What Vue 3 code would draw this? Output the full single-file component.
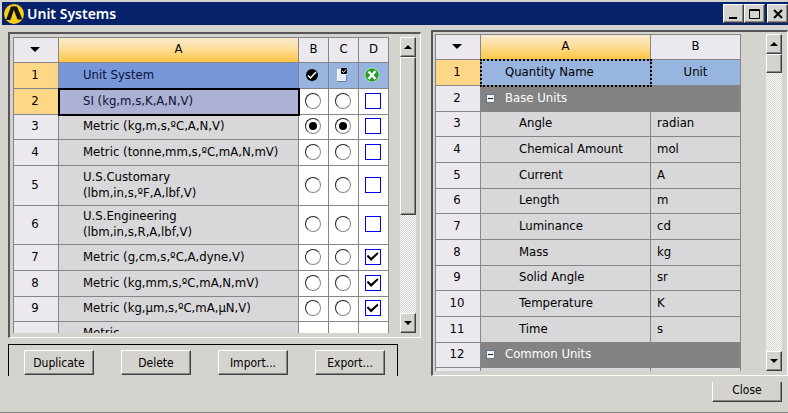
<script setup>
import { ref } from 'vue'

const active = ref(3)
const projectDefault = ref(3)
const systems = ref([
  { id: 2, lines: ['SI (kg,m,s,K,A,N,V)'], hidden: false },
  { id: 3, lines: ['Metric (kg,m,s,ºC,A,N,V)'], hidden: false },
  { id: 4, lines: ['Metric (tonne,mm,s,ºC,mA,N,mV)'], hidden: false },
  { id: 5, lines: ['U.S.Customary', '(lbm,in,s,ºF,A,lbf,V)'], hidden: false },
  { id: 6, lines: ['U.S.Engineering', '(lbm,in,s,R,A,lbf,V)'], hidden: false },
  { id: 7, lines: ['Metric (g,cm,s,ºC,A,dyne,V)'], hidden: true },
  { id: 8, lines: ['Metric (kg,mm,s,ºC,mA,N,mV)'], hidden: true },
  { id: 9, lines: ['Metric (kg,µm,s,ºC,mA,µN,V)'], hidden: true },
  { id: '', lines: ['Metric', ''], hidden: true },
])

const quantities = [
  { id: 2, group: 'Base Units' },
  { id: 3, name: 'Angle', unit: 'radian' },
  { id: 4, name: 'Chemical Amount', unit: 'mol' },
  { id: 5, name: 'Current', unit: 'A' },
  { id: 6, name: 'Length', unit: 'm' },
  { id: 7, name: 'Luminance', unit: 'cd' },
  { id: 8, name: 'Mass', unit: 'kg' },
  { id: 9, name: 'Solid Angle', unit: 'sr' },
  { id: 10, name: 'Temperature', unit: 'K' },
  { id: 11, name: 'Time', unit: 's' },
  { id: 12, group: 'Common Units' },
  { id: '', name: '', unit: '' },
]
const actions = ['Duplicate', 'Delete', 'Import...', 'Export...']
</script>

<template>
  <div class="window">
    <header class="titlebar">
      <svg class="logo" viewBox="0 0 20 20" aria-hidden="true">
        <circle cx="10" cy="10" r="10" fill="#f8cd1c" />
        <path d="M2 16 7 2.500H11L6.500 16Z" fill="#15150f" />
        <path d="M8.500 2.500H13L18.500 15.500H13.500Z" fill="#15150f" />
      </svg>
      <h1>Unit Systems</h1>
      <div class="window-buttons">
        <button type="button" class="bevel" aria-label="Minimize">
          <svg viewBox="0 0 18 16"><path d="M4 12h8" stroke="#000" stroke-width="2" /></svg>
        </button>
        <button type="button" class="bevel" aria-label="Maximize">
          <svg viewBox="0 0 18 16"><path d="M3.500 3.500h10v9H3.500zM4 4.500h9" fill="none" stroke="#000" /></svg>
        </button>
        <button type="button" class="bevel close-x" aria-label="Close window">
          <svg viewBox="0 0 18 16"><path d="M5 4l8 8M13 4l-8 8" stroke="#000" stroke-width="2" /></svg>
        </button>
      </div>
    </header>

    <main class="content">
      <div class="left">
        <section class="panel">
          <div class="sheet">
            <table>
              <colgroup>
                <col class="c-num" /><col /><col class="c-opt" /><col class="c-opt" /><col class="c-opt" />
              </colgroup>
              <tbody>
                <tr>
                  <th class="num"><i class="down"></i></th>
                  <th class="gold">A</th>
                  <th>B</th>
                  <th>C</th>
                  <th>D</th>
                </tr>
                <tr>
                  <th class="num current">1</th>
                  <td class="name head-strong">Unit System</td>
                  <td class="head icon">
                    <svg width="14" height="16" viewBox="0 0 14 16" role="img" aria-label="Active">
                      <circle cx="7" cy="8" r="6" fill="#000" />
                      <path d="M3 8.500 5.500 11 11 5" fill="none" stroke="#fff" stroke-width="1.500" />
                    </svg>
                  </td>
                  <td class="head icon">
                    <svg width="14" height="16" viewBox="0 0 14 16" role="img" aria-label="Default">
                      <path d="M2 2h10v13H2z" fill="#e4eaf6" />
                      <path d="M2.500 15V2.500H7" fill="none" stroke="#fff" />
                      <path d="M2 14.500h9.500V8" fill="none" stroke="#68809f" />
                      <rect x="6" y="1" width="6" height="6" rx="1" fill="#000" />
                      <path d="M7 4l1.500 1.500L11 2.500" fill="none" stroke="#fff" />
                    </svg>
                  </td>
                  <td class="head icon">
                    <svg width="16" height="16" viewBox="0 0 16 16" role="img" aria-label="Suppress">
                      <circle cx="8" cy="8" r="7.500" fill="#a9d6ae" />
                      <circle cx="8" cy="8" r="6.500" fill="#22a022" />
                      <path d="M4.500 4.500 11.500 12M11.500 4 4.500 12" fill="none" stroke="#fff" stroke-width="2.500" />
                    </svg>
                  </td>
                </tr>
                <tr v-for="s in systems" :key="s.id" :class="{ tall: s.lines.length > 1 }">
                  <th class="num" :class="{ current: s.id === 2 }">{{ s.id }}</th>
                  <td class="name" :class="{ selected: s.id === 2 }">
                    <span v-for="line in s.lines" :key="line" class="line">{{ line }}</span>
                  </td>
                  <td class="opt">
                    <input v-model="active" type="radio" name="active" :value="s.id" :aria-label="'Active: ' + s.lines.join(' ')" />
                  </td>
                  <td class="opt">
                    <input v-model="projectDefault" type="radio" name="default" :value="s.id" :aria-label="'Default: ' + s.lines.join(' ')" />
                  </td>
                  <td class="opt">
                    <input v-model="s.hidden" type="checkbox" :aria-label="'Suppress: ' + s.lines.join(' ')" />
                  </td>
                </tr>
              </tbody>
            </table>
          </div>
          <div class="scrollbar">
            <button type="button" class="bevel" aria-label="Scroll systems up"><i class="up small"></i></button>
            <div class="thumb long bevel"></div>
            <button type="button" class="bevel end" aria-label="Scroll systems down"><i class="down small"></i></button>
          </div>
        </section>
        <div class="actions">
          <button v-for="a in actions" :key="a" type="button" class="push">{{ a }}</button>
        </div>
      </div>

      <section class="panel quantities">
        <div class="sheet">
          <table>
            <colgroup><col class="c-num" /><col /><col class="c-unit" /></colgroup>
            <tbody>
              <tr>
                <th class="num"><i class="down"></i></th>
                <th class="gold">A</th>
                <th>B</th>
              </tr>
              <tr>
                <th class="num current">1</th>
                <td class="name head focus">Quantity Name</td>
                <td class="head">Unit</td>
              </tr>
              <tr v-for="q in quantities" :key="q.id">
                <th class="num">{{ q.id }}</th>
                <td v-if="q.group" colspan="2" class="group">
                  <button type="button" class="toggle" :aria-label="'Collapse ' + q.group"></button>{{ q.group }}
                </td>
                <template v-else>
                  <td class="name nested">{{ q.name }}</td>
                  <td class="unit">{{ q.unit }}</td>
                </template>
              </tr>
            </tbody>
          </table>
        </div>
        <div class="scrollbar">
          <button type="button" class="bevel" aria-label="Scroll quantities up"><i class="up small"></i></button>
          <div class="thumb bevel"></div>
          <button type="button" class="bevel end" aria-label="Scroll quantities down"><i class="down small"></i></button>
        </div>
      </section>
    </main>

    <footer class="footer">
      <button type="button" class="push close">Close</button>
    </footer>
  </div>
</template>

<style>
body {
  background: #d4d3cd;
}
</style>

<style scoped>
* {
  box-sizing: border-box;
}
.window {
  display: flex;
  flex-direction: column;
  height: 100vh;
  padding: 2px 0 0 2px;
  background: #d4d3cd;
  border-bottom: 1px solid #85858a;
  color: #000;
  font-family: "DejaVu Sans Condensed", "Noto Sans", sans-serif;
  font-size: 12px;
  line-height: 16px;
}
button {
  padding: 0;
  color: inherit;
  font: inherit;
}
.titlebar {
  display: flex;
  align-items: center;
  height: 23px;
  padding: 0 0 0 2px;
  background: #05226b;
}
.logo {
  width: 20px;
  height: 20px;
}
h1 {
  flex: 1;
  margin: 0 0 0 3px;
  color: #fff;
  font-family: "Noto Sans", sans-serif;
  font-size: 14px;
  font-weight: 600;
}
.window-buttons {
  display: flex;
}
.window-buttons button {
  width: 21px;
  height: 19px;
}
.window-buttons svg {
  display: block;
  width: 18px;
  height: 16px;
}
.window-buttons .close-x {
  margin-left: 2px;
}
.bevel {
  display: grid;
  place-items: center;
  background: #d4d3cd;
  border: 1px solid;
  border-color: #fff #404040 #404040 #fff;
  box-shadow: inset -1px -1px #85858a;
}
.content {
  flex: 1;
  display: grid;
  grid-template-columns: 413fr 357fr;
  gap: 10px;
  min-height: 0;
  padding: 5px 0 0 6px;
}
.left {
  display: flex;
  flex-direction: column;
  gap: 6px;
  min-width: 0;
  min-height: 0;
  padding-top: 2px;
}
.panel {
  display: flex;
  flex: 1;
  gap: 11px;
  min-width: 0;
  min-height: 0;
  padding: 3px 4px 4px 3px;
  border: 2px solid;
  border-color: #57575a #fff #fff #57575a;
  border-right-width: 1px;
  border-bottom-width: 1px;
}
.quantities {
  gap: 25px;
  padding: 2px 5px 4px 2px;
}
.sheet {
  flex: 1;
  min-width: 0;
  overflow: hidden;
}
table {
  width: 100%;
  table-layout: fixed;
  border-collapse: separate;
  border-spacing: 0;
  border: 1px solid #85858a;
  border-width: 1px 0 0 1px;
  font-size: 13px;
}
.c-num {
  width: 45px;
}
.c-opt {
  width: 30px;
}
.c-unit {
  width: 90px;
}
th,
td {
  height: 26px;
  padding: 0 0 2px;
  border: 1px solid #85858a;
  border-width: 0 1px 1px 0;
  text-align: center;
  vertical-align: middle;
}
tr:nth-child(3n + 1) > * {
  height: 25px;
}
tr.tall > * {
  height: 40px;
}
tr.tall:nth-child(3n + 1) > * {
  height: 39px;
}
th {
  background: #ece9ee;
  font-weight: 400;
}
th.num {
  padding-right: 2px;
}
th.current {
  background: #fdd785;
}
th.gold {
  background: linear-gradient(#fae9cd, #fddc93 50%, #fec844);
}
td.name {
  padding-left: 24px;
  background: #d8d7d9;
  text-align: left;
}
.line {
  display: block;
  min-height: 16px;
}
td.head {
  background: #98b5e0;
}
td.head-strong {
  background: #7797d8;
  color: #101038;
}
td.selected {
  position: relative;
  z-index: 1;
  background: #adb1d4;
  outline: 2px solid #000;
  outline-offset: -1px;
  color: #101038;
}
td.focus {
  position: relative;
  z-index: 1;
  background: #98b5e0;
  outline: 2px dotted #000;
  outline-offset: -1px;
}
td.nested {
  padding-left: 38px;
}
td.unit {
  padding-left: 6px;
  background: #d8d7d9;
  text-align: left;
}
td.group {
  background: #838383;
  color: #fff;
  text-align: left;
}
td.opt {
  padding: 0 2px 2px 0;
  background: #fff;
}
td.icon {
  padding: 0 4px 2px 0;
}
td svg {
  display: block;
  margin: 0 auto;
}
input {
  appearance: none;
  display: grid;
  place-items: center;
  width: 16px;
  height: 16px;
  margin: 0 auto;
  background: #fff;
}
input[type="radio"] {
  border: 1px solid;
  border-color: #222 #888 #888 #222;
  border-radius: 50%;
}
input[type="radio"]:checked::after {
  content: "";
  width: 8px;
  height: 8px;
  background: #000;
  border-radius: 50%;
}
input[type="checkbox"] {
  border: 1px solid #0000f0;
}
input[type="checkbox"]:checked::after {
  content: "";
  width: 12px;
  height: 10px;
  background: #000;
  clip-path: polygon(0 45%, 15% 35%, 38% 62%, 90% 8%, 100% 22%, 38% 95%);
}
.toggle {
  display: inline-block;
  width: 9px;
  height: 9px;
  margin: 0 10px 0 5px;
  background: linear-gradient(#222, #222) center / 5px 1px no-repeat, #f3f1ec;
  border: 1px solid #5c7898;
  vertical-align: 0;
}
.down,
.up {
  display: inline-block;
  width: 10px;
  height: 5px;
  background: #000;
  vertical-align: middle;
}
.down {
  clip-path: polygon(0 0, 100% 0, 50% 100%);
}
.up {
  clip-path: polygon(50% 0, 100% 100%, 0 100%);
}
.small {
  width: 8px;
  height: 4px;
}
.scrollbar {
  display: flex;
  flex-direction: column;
  width: 16px;
  background: repeating-conic-gradient(#fff 0 25%, #d4d3cd 0 50%) 0 0 / 2px 2px;
}
.scrollbar button {
  width: 16px;
  height: 20px;
}
.scrollbar .end {
  margin-top: auto;
}
.thumb {
  height: 19px;
}
.thumb.long {
  height: 158px;
}
.actions {
  display: flex;
  gap: 27px;
  width: 390px;
  height: 32px;
  padding: 5px 0 0 15px;
  border: 1px solid #000;
  border-bottom: 0;
}
.push {
  width: 70px;
  height: 25px;
  background: #d4d3cd;
  border: 1px solid;
  border-color: #fff #404040 #404040 #fff;
  box-shadow: inset -1px -1px #85858a;
}
.footer {
  display: flex;
  justify-content: flex-end;
  height: 36px;
  padding: 6px 6px 0 0;
}
.close {
  height: 20px;
  padding-bottom: 4px;
  border-top: 0;
}
</style>
